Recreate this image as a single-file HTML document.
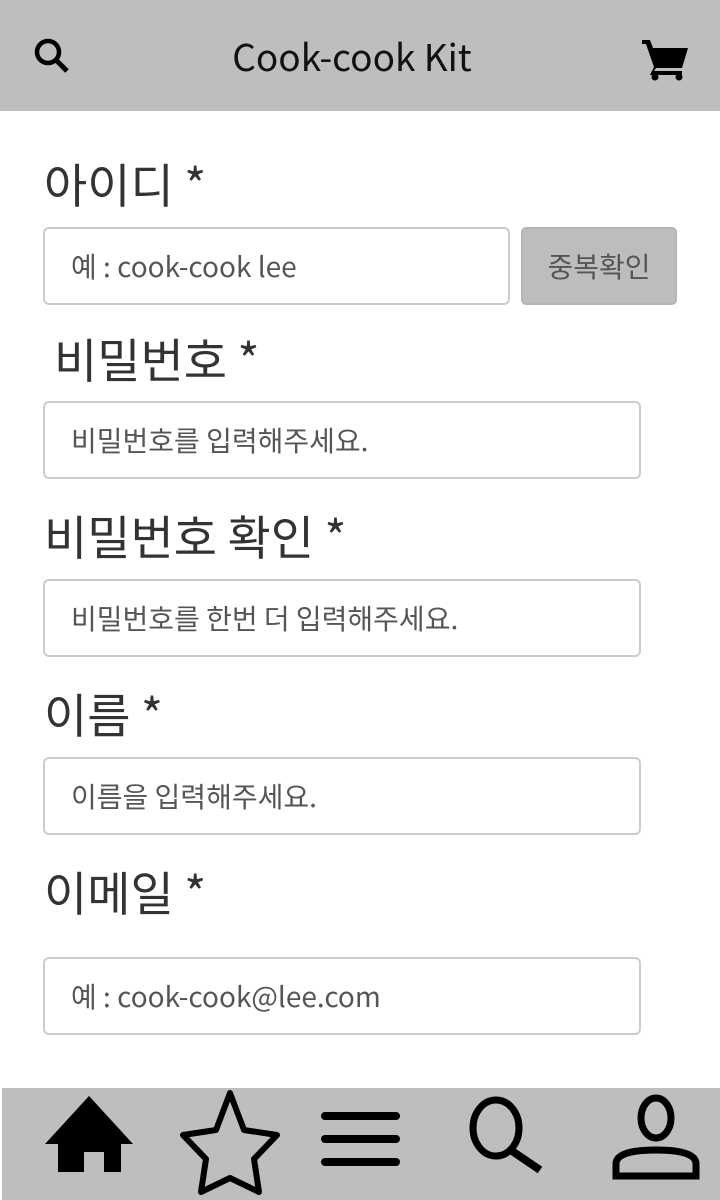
<!DOCTYPE html>
<html><head><meta charset="utf-8"><style>
*{margin:0;padding:0;box-sizing:border-box}
body{width:720px;height:1200px;background:#fff;position:relative;overflow:hidden;font-family:"Liberation Sans","Noto Sans CJK KR",sans-serif}
.hdr{position:absolute;left:0;top:0;width:720px;height:111px;background:#bebebe}
.title{position:absolute;left:0;width:704px;top:30px;text-align:center;font-size:37px;color:#111;font-family:"Noto Sans CJK KR",sans-serif;line-height:50px}
.lbl{position:absolute;font-size:47px;color:#333;font-family:"Noto Sans CJK KR",sans-serif;line-height:60px}
.inp{position:absolute;left:43px;width:598px;height:78px;border:2px solid #ccc;border-radius:6px;background:#fff;font-size:28px;color:#555;padding-left:26px;line-height:74px;font-family:"Noto Sans CJK KR",sans-serif}
.btn{position:absolute;left:521px;top:227px;width:156px;height:78px;background:#bdbdbd;border:2px solid #b5b5b5;border-radius:5px;font-size:28px;color:#555;text-align:center;line-height:74px;font-family:"Noto Sans CJK KR",sans-serif}
.bar{position:absolute;left:2px;top:1088px;width:718px;height:112px;background:#bebebe}
</style></head><body>
<div class="hdr">
<svg style="position:absolute;left:32px;top:36px" width="40" height="40" viewBox="0 0 40 40"><circle cx="16" cy="16" r="11" fill="none" stroke="#000" stroke-width="4.5"/><line x1="24" y1="24" x2="35" y2="35" stroke="#000" stroke-width="5"/></svg>
<div class="title">Cook-cook Kit</div>
<svg style="position:absolute;left:640px;top:36px" width="50" height="46" viewBox="0 0 50 46"><path d="M2 4h8l3 8h35l-6 20H16l-2 3h28v4H10l4-8-8-23H2z" fill="#000"/><circle cx="15" cy="41" r="3.5" fill="#000"/><circle cx="39" cy="41" r="3.5" fill="#000"/></svg>
</div>
<div class="lbl" style="left:44px;top:153px">아이디 *</div>
<div class="inp" style="width:467px;top:227px">예 : cook-cook lee</div>
<div class="btn">중복확인</div>
<div class="lbl" style="left:54px;top:328px">비밀번호 *</div>
<div class="inp" style="top:401px">비밀번호를 입력해주세요.</div>
<div class="lbl" style="left:44px;top:505px">비밀번호 확인 *</div>
<div class="inp" style="top:579px">비밀번호를 한번 더 입력해주세요.</div>
<div class="lbl" style="left:44px;top:683px">이름 *</div>
<div class="inp" style="top:757px">이름을 입력해주세요.</div>
<div class="lbl" style="left:44px;top:861px">이메일 *</div>
<div class="inp" style="top:957px">예 : cook-cook@lee.com</div>
<div class="bar">
<svg width="718" height="112" viewBox="2 1088 718 112" style="position:absolute;left:0;top:0">
<path d="M89 1096 L133 1144 L121 1144 L121 1172 L104 1172 L104 1152 L84 1152 L84 1172 L58 1172 L58 1144 L45 1144 Z" fill="#000"/>
<path d="M230 1093 L244 1130 L277 1135 L254 1159 L259 1192 L230 1178 L201 1192 L206 1159 L183 1135 L216 1130 Z" fill="none" stroke="#000" stroke-width="6" stroke-linejoin="round"/>
<g stroke="#000" stroke-width="8" stroke-linecap="round"><line x1="325" y1="1116" x2="396" y2="1116"/><line x1="325" y1="1139" x2="396" y2="1139"/><line x1="325" y1="1162" x2="396" y2="1162"/></g>
<ellipse cx="496" cy="1128" rx="23" ry="28" fill="none" stroke="#000" stroke-width="7"/>
<line x1="512" y1="1151" x2="540" y2="1170" stroke="#000" stroke-width="8"/>
<ellipse cx="656" cy="1118" rx="15" ry="20" fill="none" stroke="#000" stroke-width="7"/>
<path d="M616 1176 V1164 Q616 1150 656 1150 Q696 1150 696 1164 V1176 Z" fill="none" stroke="#000" stroke-width="7"/>
</svg>
</div>
</body></html>
